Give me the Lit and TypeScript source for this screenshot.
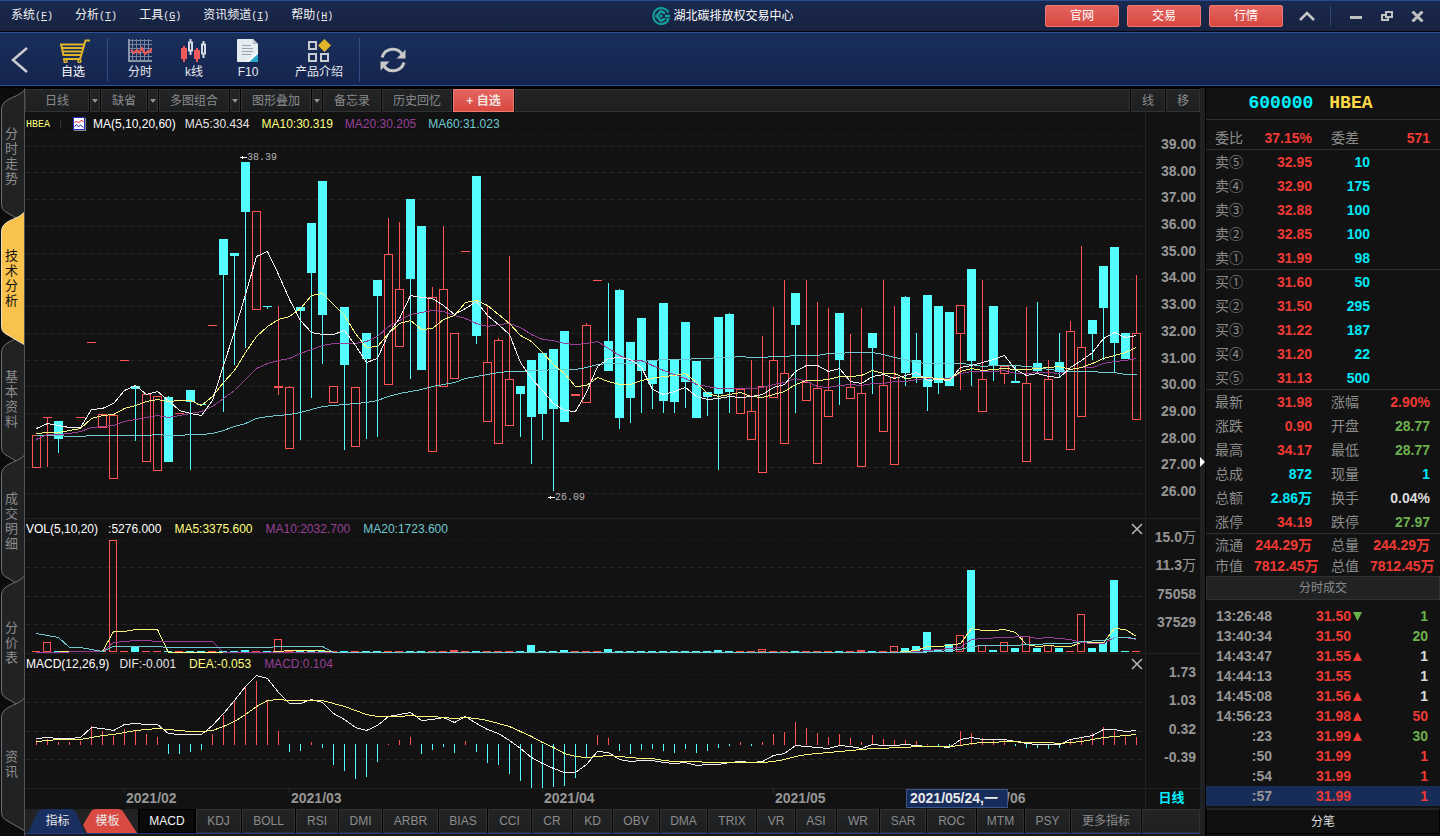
import { LitElement, html, svg, css, nothing } from "lit";
import { customElement, property } from "lit/decorators.js";
import { classMap } from "lit/directives/class-map.js";

/* One bar every STEP pixels, the first one centred at ORIGIN. */
const STEP = 11;
const ORIGIN = 11;

/* Candles: "r" rising (hollow red) or "c" falling (solid cyan), then high, body top, body bottom, low. */
type Candle = [string, number, number, number, number];
const candles: Candle[] = [
  ["r",325,325,358,358],["r",307,307,308,357],["c",311,311,329,343],["r",317,317,318,318],["r",307,307,308,308],
  ["r",232,232,233,233],["r",304,304,318,318],["r",305,305,369,369],["r",250,250,251,251],["c",275,276,279,331],
  ["r",284,284,352,352],["r",286,286,361,361],["c",286,287,352,352],["r",303,303,304,304],["c",280,280,292,360],
  ["c",294,294,295,295],["r",215,215,216,216],["c",129,129,165,302],["c",143,143,146,255],["c",52,52,102,238],
  ["r",101,101,200,200],["c",196,196,197,199],["r",196,276,278,285],["r",276,277,339,339],["c",197,197,201,330],
  ["c",113,113,163,288],["c",71,71,205,254],["r",276,276,293,293],["c",197,197,255,340],["r",277,277,337,337],
  ["c",223,223,249,329],["c",170,170,186,327],["r",108,144,275,275],["r",112,179,237,237],["c",89,89,169,269],
  ["c",116,116,260,260],["r",177,187,342,342],["r",116,179,277,277],["r",223,223,269,269],["r",141,141,142,142],
  ["c",66,66,226,234],["r",195,252,312,312],["r",228,230,334,334],["r",146,269,316,316],["c",276,276,284,327],
  ["c",250,250,307,354],["c",243,243,304,330],["c",239,239,299,381],["c",221,221,312,312],["r",284,284,286,286],
  ["r",213,215,293,293],["r",170,170,171,171],["c",173,231,261,261],["c",179,180,308,319],["c",232,232,288,313],
  ["c",208,208,261,303],["c",251,251,274,299],["c",193,193,291,303],["c",250,250,292,303],["c",212,212,272,298],
  ["c",251,251,308,308],["c",282,282,287,306],["c",207,207,284,360],["c",203,204,282,303],["r",279,279,304,304],
  ["r",250,301,330,330],["r",226,276,363,363],["r",197,250,288,288],["r",170,263,334,334],["c",183,183,215,303],
  ["r",170,272,291,291],["r",192,278,354,354],["r",198,280,307,307],["c",203,203,250,295],["r",224,277,289,289],
  ["r",198,283,357,357],["c",223,223,238,284],["r",170,275,322,322],["r",196,267,355,355],["c",186,187,263,276],
  ["c",223,250,267,273],["c",185,185,277,301],["c",196,196,273,284],["c",202,202,276,276],["r",195,195,224,280],
  ["c",159,159,251,276],["r",170,269,302,302],["c",196,196,255,271],["r",256,256,264,274],["c",256,271,273,273],
  ["r",197,273,352,352],["c",192,253,261,262],["r",250,269,330,330],["c",223,252,262,267],["r",211,221,340,340],
  ["r",136,237,307,307],["c",210,210,224,250],["c",156,156,198,250],["c",137,137,233,263],["c",223,223,249,249],
  ["r",165,223,310,310],
];

const ma5 = [318,313,315,317,317,299,298,293,280,275,284,281,290,300,303,305,290,255,221,184,146,141,164,189,210,222,224,224,220,235,252,248,223,208,185,187,188,195,204,198,191,205,214,224,252,268,280,293,300,301,282,256,248,247,249,257,279,284,281,277,286,289,288,286,287,286,284,277,274,261,255,255,261,258,271,273,266,264,268,265,262,270,269,270,257,255,252,249,245,259,265,263,266,267,257,250,242,228,222,227,225];
const ma10 = [323,322,322,320,318,308,305,304,298,295,291,289,291,290,290,295,286,272,260,242,226,216,209,206,198,185,183,194,205,223,237,236,223,213,210,219,218,209,205,192,190,195,204,213,225,231,242,254,263,276,275,267,271,274,274,270,268,266,265,263,272,283,286,284,282,286,287,284,281,274,270,270,269,266,266,265,260,263,263,268,267,267,268,269,261,258,260,259,258,259,259,258,257,256,259,257,253,248,245,242,237];
const ma20 = [329,324,324,323,321,317,316,315,311,309,307,305,307,305,303,301,296,288,280,269,258,253,250,248,243,239,235,233,233,233,231,226,216,210,204,202,200,201,205,208,213,216,214,213,217,224,229,230,233,234,233,231,238,245,250,250,255,260,264,268,274,276,278,278,278,278,277,274,272,268,271,276,277,275,274,275,273,273,271,271,269,268,268,268,263,261,261,261,260,263,263,262,262,263,259,257,257,253,251,250,248];
const ma60 = [325,325,325,326,326,325,325,325,325,325,325,324,325,325,324,324,323,320,316,313,308,306,305,304,302,299,296,295,294,293,292,290,286,283,281,279,276,274,272,268,266,264,262,261,261,260,260,259,259,259,257,254,253,253,253,251,250,249,249,249,248,248,247,247,246,247,247,246,246,245,245,245,243,243,242,242,242,244,247,249,252,253,253,253,253,254,256,255,255,255,256,257,259,260,261,261,261,262,262,264,264];

/* Volume bars whose top differs from the flat minimum. */
const volumeBase = 137;
const volumeTops: Record<number, number> = {
  1:127,7:25,9:132,19:135,22:124,38:135,45:130,48:135,52:134,62:135,66:134,75:135,78:131,79:133,80:131,81:117,82:135,83:129,84:120,85:55,
  86:130,87:135,88:127,89:133,90:121,91:133,92:130,93:133,95:99,96:133,97:127,98:65,
};
type Knot = [number, number];
const volMa5: Knot[] = [[2,136],[6,136],[7,116],[8,116],[9,114],[11,114],[12,137],[21,137],[22,136],[23,135],[26,135],[27,137],[78,137],[79,136],[80,135],[81,131],[82,131],[83,130],[84,128],[85,113],[86,115],[87,115],[88,114],[89,117],[90,129],[91,131],[92,130],[93,131],[94,131],[95,127],[97,127],[98,113],[99,114],[100,121]];
const volMa10: Knot[] = [[0,137],[6,136],[7,127],[9,125],[10,125],[11,126],[16,126],[17,137],[79,137],[80,136],[82,134],[83,133],[84,132],[85,124],[86,123],[88,122],[90,121],[91,123],[92,122],[93,123],[94,124],[95,127],[96,128],[97,128],[98,122],[99,122],[100,124]];
const volMa20: Knot[] = [[0,118],[2,122],[3,132],[4,132],[5,134],[6,136],[7,131],[11,131],[12,132],[21,132],[22,131],[26,131],[27,137],[80,137],[82,136],[83,135],[84,134],[85,131],[86,130],[89,130],[90,129],[91,129],[92,128],[94,128],[95,126],[97,125],[98,122],[99,122],[100,123]];

/* MACD histogram ends; above the axis is red, below is cyan. */
const macdAxis = 229;
const macdBars = [225,224,227,227,226,211,216,221,214,215,219,222,239,239,237,235,219,200,186,172,166,185,216,237,236,227,233,250,256,264,262,247,229,225,222,239,235,232,238,226,237,248,250,259,266,273,273,272,271,263,243,220,223,236,239,235,234,236,238,234,238,236,233,231,227,231,227,219,217,207,213,218,222,219,223,227,220,224,225,225,226,229,231,232,216,218,223,225,225,231,233,233,234,233,224,223,218,212,216,222,222];
const dif = [223,222,223,223,222,212,213,215,209,208,209,209,218,219,219,219,210,198,185,171,160,163,177,188,188,184,187,198,204,212,215,210,201,199,197,205,204,202,207,201,208,214,218,225,233,242,248,253,257,257,249,236,237,244,246,245,245,247,248,247,250,249,249,247,246,247,246,240,238,230,231,232,233,230,231,233,229,230,230,229,230,231,231,232,224,222,224,224,224,226,228,229,229,229,224,222,220,214,214,216,215];
const dea = [226,225,224,224,224,222,220,219,217,215,214,213,214,215,216,216,215,211,206,199,191,185,184,185,185,185,185,188,191,195,199,201,201,201,200,201,201,202,203,202,203,205,208,211,216,221,227,232,238,241,242,241,240,241,242,243,243,245,246,246,246,247,247,247,247,247,247,246,244,241,239,238,237,236,235,234,233,233,232,232,231,231,231,231,230,228,227,227,226,226,227,227,227,228,227,226,224,222,221,220,219];

const knots = (ys: number[]): Knot[] => ys.map((y, i) => [i, y]);
const points = (ks: Knot[]) => ks.map(([i, y]) => `${ORIGIN + STEP * i + 0.5},${y + 0.5}`).join(" ");
const curve = (ks: Knot[], tone: string) => svg`<polyline class="curve ${tone}" points=${points(ks)} />`;
const grid = (dotted: number, rows: number[]) => svg`
  <line class="grid dots" x1="0" x2="100%" y1=${dotted + 0.5} y2=${dotted + 0.5} />
  ${rows.map((y) => svg`<line class="grid" x1="1" x2="100%" y1=${y + 0.5} y2=${y + 0.5} />`)}`;

@customElement("price-chart")
class PriceChart extends LitElement {
  @property() kind = "price";

  static styles = css`
    :host { display: block; min-width: 0; min-height: 0; overflow: hidden; }
    .plot { display: block; width: 100%; height: 100%; shape-rendering: crispEdges; }
    .grid { stroke: #232323; stroke-dasharray: 5 3; }
    .dots { stroke-dasharray: 1 2; }
    .curve { fill: none; stroke-width: 1; }
    .white { stroke: #f0f0f0; }
    .yellow { stroke: #f8f880; }
    .purple { stroke: #984098; }
    .teal { stroke: #70c8d0; }
    .up { fill: none; stroke: #ff5454; }
    .up-fill { fill: #ff5454; }
    .down { fill: #54ffff; }
    .note { fill: #b4b4b4; font: 10px "Liberation Mono", monospace; }
    .arrow { fill: none; stroke: #fff; }
  `;

  private candle([k, hi, top, bot, lo]: Candle, i: number) {
    const x = ORIGIN + STEP * i;
    if (k === "c") {
      return svg`<rect class="down" x=${x - 4} y=${top} width="9" height=${bot - top} />
        <rect class="down" x=${x} y=${hi} width="1" height=${lo - hi} />`;
    }
    const flat = bot - top < 3;
    return svg`
      ${flat
        ? svg`<rect class="up-fill" x=${x - 4} y=${top} width="9" height=${bot - top} />`
        : svg`<rect class="up" x=${x - 3.5} y=${top + 0.5} width="8" height=${bot - top - 1} />`}
      ${hi < top ? svg`<rect class="up-fill" x=${x} y=${hi} width="1" height=${top - hi} />` : nothing}
      ${lo > bot ? svg`<rect class="up-fill" x=${x} y=${bot} width="1" height=${lo - bot} />` : nothing}`;
  }

  private mark(x: number, y: number, label: string) {
    return svg`<path class="arrow" d="M${x} ${y + 0.5}h7M${x + 2.5} ${y - 1}v3" />
      <text class="note" x=${x + 7} y=${y + 3}>${label}</text>`;
  }

  private price() {
    return svg`<g transform="translate(0 -24)">
      ${grid(24, [36,62,89,116,143,169,196,223,250,276,303,330,357,383])}
      ${candles.map((c, i) => this.candle(c, i))}
      ${curve(knots(ma60), "teal")}${curve(knots(ma20), "purple")}${curve(knots(ma10), "yellow")}${curve(knots(ma5), "white")}
      ${this.mark(215, 47, "38.39")}${this.mark(523, 387, "26.09")}
    </g>`;
  }

  private volume() {
    return svg`<g transform="translate(0 -24)">
      ${grid(24, [52, 81, 109])}
      ${candles.map(([k], i) => {
        const x = ORIGIN + STEP * i - 4;
        const top = volumeTops[i] ?? 136;
        const h = volumeBase - top;
        if (k === "c") return svg`<rect class="down" x=${x} y=${top} width="8" height=${h} />`;
        return h < 3
          ? svg`<rect class="up-fill" x=${x} y=${top} width="8" height=${h} />`
          : svg`<rect class="up" x=${x + 0.5} y=${top + 0.5} width="7" height=${h - 1} />`;
      })}
      ${curve(volMa5, "yellow")}${curve(volMa10, "purple")}${curve(volMa20, "teal")}
    </g>`;
  }

  private macd() {
    return svg`<g transform="translate(0 -159)">
      ${grid(159, [187, 216, 244])}
      ${macdBars.map((y, i) => {
        const x = ORIGIN + STEP * i;
        return y <= macdAxis
          ? svg`<rect class="up-fill" x=${x} y=${y} width="1" height=${macdAxis + 1 - y} />`
          : svg`<rect class="down" x=${x} y=${macdAxis} width="1" height=${y - macdAxis} />`;
      })}
      ${curve(knots(dif), "white")}${curve(knots(dea), "yellow")}
    </g>`;
  }

  render() {
    const body = this.kind === "price" ? this.price() : this.kind === "volume" ? this.volume() : this.macd();
    return html`<svg class="plot" role="img" aria-label=${this.kind}>${body}</svg>`;
  }
}

@customElement("chart-panel")
class ChartPanel extends LitElement {
  @property() kind = "price";
  @property({ attribute: false }) legend: [string, string][] = [];
  @property({ attribute: false }) scale: string[] = [];

  static styles = css`
    :host { display: grid; grid-template-columns: minmax(0, 1fr) 55px; border-bottom: 1px solid #222; box-sizing: border-box; height: 135px; }
    :host([kind="price"]) { height: auto; flex: 1; min-height: 0; }
    .main { display: grid; grid-template-rows: 20px minmax(0, 1fr); min-width: 0; min-height: 0; }
    :host([kind="price"]) .main { grid-template-rows: 22px minmax(0, 1fr); }
    .legend { display: flex; align-items: center; gap: 13px; box-sizing: border-box; padding: 0 2px 0 1px; font: 12px/16px "Liberation Sans", sans-serif; white-space: nowrap; }
    :host([kind="price"]) .legend { gap: 12px; padding-top: 2px; }
    .code { display: flex; align-items: center; gap: 10px; color: #ffff80; font: 10px "Liberation Mono", monospace; }
    .code::after { content: ""; width: 1px; height: 8px; background: #333; }
    .badge { margin-right: -5px; }
    .white { color: #fff; }
    .soft { color: #e4e4e4; }
    .yellow { color: #ffff80; }
    .purple { color: #984098; }
    .teal { color: #70c8d0; }
    .first { margin-right: -3px; }
    .close { margin-left: auto; padding: 0; width: 12px; height: 12px; border: 0; background: none; display: flex; }
    .axis { display: flex; flex-direction: column; justify-content: space-between; box-sizing: border-box; padding: 10px 4px 23px 0; border-left: 1px solid #222; text-align: right; color: #969696; font: bold 14px/16px "Liberation Sans", "Noto Sans CJK SC", sans-serif; }
    :host([kind="price"]) .axis { padding: 24px 4px 19px 0; }
    .unit { font-weight: 400; }
  `;

  render() {
    return html`
      <div class="main">
        <div class="legend">
          ${this.kind === "price"
            ? html`<span class="code">HBEA</span>
                <svg class="badge" width="13" height="14" viewBox="0 0 13 14"><path fill="#888" d="M1 1h12v13H1z"/><path fill="#fff" stroke="#2030c0" d="M.5.5h11v12H.5z"/><path fill="none" stroke="#f02020" d="M1.500 6l2-2 2 2 3-3 2 2"/><path fill="none" stroke="#2020d0" d="M1.500 9.500l2-2 2 2.500 2-2 3 2.500"/></svg>`
            : nothing}
          ${this.legend.map(([text, tone], i) => html`<span class="${tone} ${i === 0 ? "first" : ""}">${text}</span>`)}
          ${this.kind === "price"
            ? nothing
            : html`<button class="close" aria-label="关闭"><svg width="12" height="12"><path d="M1 1L11 11M11 1L1 11" stroke="#b8b8b8" stroke-width="1.500"/></svg></button>`}
        </div>
        <price-chart kind=${this.kind}></price-chart>
      </div>
      <div class="axis">
        ${this.scale.map((s) => html`<span>${s.replace("万", "")}${s.endsWith("万") ? html`<span class="unit">万</span>` : nothing}</span>`)}
      </div>`;
  }
}

const menus: [string, string][] = [["系统", "F"], ["分析", "T"], ["工具", "G"], ["资讯频道", "I"], ["帮助", "H"]];
const sideTabs = ["分时走势", "技术分析", "基本资料", "成交明细", "分价表", "资讯"];
const indicators: [string, number][] = [
  ["MACD",56],["KDJ",45],["BOLL",53],["RSI",42],["DMI",43],["ARBR",55],["BIAS",48],["CCI",43],["CR",40],["KD",39],["OBV",46],
  ["DMA",47],["TRIX",48],["VR",38],["ASI",40],["WR",42],["SAR",46],["ROC",49],["MTM",47],["PSY",45],["更多指标",70],
];
const sells = [["卖⑤","32.95","10"],["卖④","32.90","175"],["卖③","32.88","100"],["卖②","32.85","100"],["卖①","31.99","98"]];
const buys = [["买①","31.60","50"],["买②","31.50","295"],["买③","31.22","187"],["买④","31.20","22"],["买⑤","31.13","500"]];
const facts = [
  ["最新","31.98","red","涨幅","2.90%","red"],
  ["涨跌","0.90","red","开盘","28.77","green"],
  ["最高","34.17","red","最低","28.77","green"],
  ["总成","872","cyan","现量","1","cyan"],
  ["总额","2.86万","cyan","换手","0.04%","pale"],
  ["涨停","34.19","red","跌停","27.97","green"],
];
const totals = [
  ["流通","244.29万","red","总量","244.29万","red"],
  ["市值","7812.45万","red","总值","7812.45万","red"],
];
const trades = [
  ["13:26:48","31.50","down","1","green"],
  ["13:40:34","31.50","","20","green"],
  ["14:43:47","31.55","up","1","pale"],
  ["14:44:13","31.55","","1","pale"],
  ["14:45:08","31.56","up","1","pale"],
  ["14:56:23","31.98","up","50","red"],
  [":23","31.99","up","30","green"],
  [":50","31.99","","1","red"],
  [":54","31.99","","1","red"],
  [":57","31.99","","1","red"],
];
const months: [number, string][] = [[99, "2021/02"], [264, "2021/03"], [517, "2021/04"], [748, "2021/05"]];

const cartIcon = svg`<svg width="34" height="24" viewBox="-4 0 34 24" fill="none" stroke="#e0b428" stroke-width="2"><path d="M30 1.500h-4.500L21 17l-1 3H3M0 5.500h24M1 5l2.500 11.500M2 9h21M3 12.500h19M3 16h18"/><circle cx="5.500" cy="22" r="1.500" stroke-width="1.500"/><circle cx="19.500" cy="22" r="1.500" stroke-width="1.500"/></svg>`;
const timeIcon = svg`<svg width="24" height="24" viewBox="0 0 24 24" fill="none"><path stroke="#7684a0" d="M4.500 0v21M8.500 0v21M12.500 0v21M16.500 0v21M20.500 0v21M2 1.500h22M2 5.500h22M2 9.500h22M2 13.500h22M2 17.500h22"/><path stroke="#8894a8" stroke-width="2" d="M1 0v22h23"/><path stroke="#f05a5a" stroke-width="2" d="M3 11l3 3 3-3 2 3 3-5 3 6 3-3 2 1 2-4"/></svg>`;
const candleIcon = svg`<svg width="26" height="24" viewBox="0 0 26 24"><path fill="#f05a5a" d="M0 9h6v11H4v3H2v-3H0zM2 7h2v2H2zM13 11h6v9h-2v3h-2v-3h-2zM15 9h2v2h-2z"/><path fill="none" stroke="#d4dae4" stroke-width="2" d="M8 3.500h3v8H8zM9.500 0v3M9.500 12v4M21 5.500h3v9h-3zM22.500 2v3M22.500 15v4"/></svg>`;
const fileIcon = svg`<svg width="22" height="24" viewBox="0 0 22 24"><path fill="#e4ecf0" d="M1 0h15l5 5v18H1a1 1 0 0 1-1-1V1a1 1 0 0 1 1-1z"/><path fill="#b8c4cc" d="M16 0l5 5h-5z"/><path stroke="#9aa4ac" d="M5 6.500h9M5 9.500h11M5 12.500h11M5 15.500h9"/><path fill="#fff" d="M21 12v5l-9 6h-3z"/><path fill="#28a8c8" d="M21 15v8h-9z"/></svg>`;
const productIcon = svg`<svg width="24" height="24" viewBox="0 0 24 24"><path fill="none" stroke="#c8ccd2" stroke-width="2" d="M2 3h7v7H2zM2 15h7v7H2zM14 15h7v7h-7z"/><path fill="#e0b428" d="M17.500 0l6.500 6.500-6.500 6.500L11 6.500z"/></svg>`;
const logoIcon = svg`<svg width="18" height="18" viewBox="0 0 18 18" fill="none" stroke="#16a09c"><path stroke-width="2" d="M16.500 5.500A8 8 0 1 0 16.500 12.500"/><path stroke-width="2.500" d="M18 9h-5M13 6.500L9 4 4.500 9 9 14l4-2.500"/><path stroke-width="1.500" d="M8 9l1-1 1 1-1 1zM14 12h3.500"/></svg>`;
const refreshIcon = svg`<svg width="28" height="28" viewBox="0 0 28 28" fill="none" stroke="#c8c8c8" stroke-width="3"><path d="M3 11.500C6 1.500 19 .5 23.500 9M25 16.500C22 26.500 9 27.500 4.500 19"/><path fill="#c8c8c8" stroke="none" d="M26.500 3.500v9h-9zM1.500 24.500v-9h9z"/></svg>`;

@customElement("app-root")
class AppRoot extends LitElement {
  static styles = css`
    :host { display: flex; flex-direction: column; height: 100vh; background: #121212; color: #8c8c8c; font: 12px/16px "Liberation Sans", "Noto Sans CJK SC", sans-serif; overflow: hidden; cursor: default; }
    button { font: inherit; color: inherit; padding: 0; margin: 0; border: 0; background: none; white-space: nowrap; }
    svg { display: block; flex: none; }

    .menubar { display: grid; grid-template-columns: minmax(0, 1fr) auto minmax(0, 1fr); align-items: center; height: 32px; box-sizing: border-box; border-top: 1px solid #29498f; border-bottom: 1px solid #03060e; background: linear-gradient(#1a2950, #17223f); color: #f0f0f0; }
    .menus { display: flex; gap: 22px; padding-left: 11px; }
    .key { font: 10px/16px "Liberation Mono", monospace; }
    .title { display: flex; align-items: center; gap: 3px; padding-left: 6px; color: #fff; }
    .tools { display: flex; align-items: center; justify-content: flex-end; padding-right: 16px; }
    .cta { width: 74px; height: 22px; margin-right: 8px; border: 1px solid #e87870; border-radius: 2px; box-sizing: border-box; background: linear-gradient(#e46460, #d84840); color: #fff; }
    .fold { margin: 0 15px 0 8px; }
    .rule { width: 1px; height: 20px; background: #34466e; }
    .win { margin-left: 18px; }

    .toolbar { display: flex; align-items: center; height: 56px; box-sizing: border-box; border-top: 1px solid #2c509c; border-bottom: 2px solid #000; box-shadow: inset 0 -1px #2c509c; background: linear-gradient(#182f5a, #16244e); color: #e4e8f0; }
    .back { width: 46px; padding-left: 11px; }
    .tool { width: 54px; display: flex; flex-direction: column; align-items: center; gap: 1px; }
    .tool.wide { width: 80px; margin-left: 4px; }
    .tool.current { color: #fff; }
    .split { width: 1px; height: 44px; background: #324b80; }
    .group { display: flex; padding: 0 0 0 5px; }
    .first-group { padding: 0 7px 0 0; }
    .refresh { margin-left: 19px; }

    .body { flex: 1; min-height: 0; display: flex; }
    .side { width: 25px; flex: none; display: flex; flex-direction: column; padding: 2px 0 17px; box-sizing: border-box; border-right: 1px solid #555; background: #0c0c0c; }
    .side-tab { flex: 1; min-height: 0; position: relative; display: flex; align-items: center; justify-content: center; padding-top: 11px; }
    .side-tab.active { z-index: 1; color: #141414; }
    .shape { position: absolute; left: 0; top: 0; width: 24px; height: calc(100% + 11px); fill: #202224; stroke: #707070; overflow: visible; }
    .active .shape { fill: #f8c24c; stroke: #e8e0c0; }
    .side-text { position: relative; width: 14px; margin-right: 1px; white-space: normal; word-break: break-all; font-size: 13px; line-height: 15px; }

    .charts { flex: 1; min-width: 0; display: flex; flex-direction: column; }
    .chartbar { display: flex; gap: 1px; height: 24px; padding-top: 1px; box-sizing: border-box; background: #000; }
    .cell { box-sizing: border-box; height: 23px; flex: none; border: 1px solid #303234; background: linear-gradient(#222426, #1c1e20); }
    .cell.d { width: 64px; }
    .cell.arrow { width: 10px; display: flex; align-items: center; justify-content: center; }
    .cell.w2 { width: 46px; }
    .cell.w3 { width: 58px; }
    .cell.w4 { width: 70px; }
    .cell.tail { width: 34px; }
    .cell.pick { width: 61px; background: linear-gradient(#e46460, #d84840); border-color: #ec7c74; color: #f4e4e0; font-weight: 700; }
    .cell.fill { flex: 1; min-width: 0; }

    .dates { display: grid; grid-template-columns: minmax(0, 1fr) 55px; height: 20px; flex: none; }
    .date-plot { width: 100%; height: 20px; font: bold 14px "Liberation Sans", "Noto Sans CJK SC", sans-serif; }
    .month { fill: #969696; }
    .tick { stroke: #2c2c2c; }
    .cursor { fill: #182c5c; stroke: #3c5488; }
    .cursor-text { fill: #e8e8e8; }
    .period { border-left: 1px solid #222; box-sizing: border-box; padding-right: 3px; text-align: center; color: #00f0ff; font-weight: 700; font-size: 13px; line-height: 17px; }

    .tabs { display: flex; gap: 1px; height: 27px; flex: none; box-sizing: border-box; padding-bottom: 3px; background: linear-gradient(#000 24px, #1f3c80 24px, #1f3c80 25px, #1a1a1c 25px); }
    .tabs .cell { height: 24px; }
    .tabs .cell.on { background: #0a0a0a; border-color: #000; color: #f4f4f4; }
    .modes { width: 113px; flex: none; display: flex; background: #202224; }
    .mode { position: relative; width: 57px; margin-left: 3px; height: 24px; padding-left: 2px; color: #e8e8e8; }
    .mode + .mode { width: 54px; margin-left: -2px; padding: 0 5px 0 0; }
    .mode svg { position: absolute; inset: 0; }
    .mode-text { position: relative; }

    .grip { width: 5px; flex: none; background: #1e2022; display: flex; align-items: center; }
    .quote { width: 234px; flex: none; border-left: 1px solid #000; display: flex; flex-direction: column; }
    .name { display: flex; justify-content: center; gap: 16px; height: 32px; box-sizing: border-box; padding-right: 25px; border-bottom: 1px solid #303030; font: bold 18px/30px "Liberation Mono", monospace; color: #fcd848; }
    .name .id { color: #00f0ff; }
    table { border-collapse: collapse; table-layout: fixed; width: 100%; white-space: nowrap; }
    .book col:nth-child(1) { width: 48px; }
    .book col:nth-child(2), .book col:nth-child(3) { width: 58px; }
    th, td { padding: 0; line-height: 20px; }
    th { font-weight: 400; font-size: 14px; text-align: left; padding-left: 9px; }
    td { font: bold 14px/20px "Liberation Sans", "Noto Sans CJK SC", sans-serif; text-align: right; }
    .book th, .book td { padding-top: 2px; }
    .book th + td + th { padding-left: 19px; }
    .book td:nth-child(4) { padding-right: 10px; }
    .book tr { height: 24px; }
    .book tbody { border-bottom: 1px solid #303030; }
    .book .ratio tr { height: 29px; }
    .book .ratio th, .book .ratio td { padding-top: 8px; }
    .book .sum { border-bottom: 0; }
    .book .sum tr { height: 21px; }
    .book .sum th, .book .sum td { line-height: 18px; }
    .red { color: #f03a34; }
    .cyan { color: #00e8f8; }
    .green { color: #6cb04c; }
    .pale { color: #dcdcdc; }
    .caption { height: 24px; box-sizing: border-box; border: 1px solid #303234; background: #202224; text-align: center; line-height: 22px; margin: 1px 0 6px; }
    .ticks { margin-bottom: 2px; }
    .ticks tr { height: 20px; }
    .ticks col:nth-child(1) { width: 66px; }
    .ticks col:nth-child(2) { width: 79px; }
    .ticks td:nth-child(1) { color: #969696; }
    .ticks td:nth-child(3) { padding-left: 2px; }
    .ticks td:nth-child(4) { padding-right: 12px; }
    .ticks .now { background: #182c58; }
    .ticks-foot { flex: none; height: 26px; border: 1px solid #000; border-top: 2px solid #242424; box-sizing: border-box; color: #dcdcdc; background: #101010; }
  `;

  private factRows(rows: string[][]) {
    return rows.map((r) => html`<tr><th>${r[0]}</th><td class=${r[2]}>${r[1]}</td><th>${r[3]}</th><td class=${r[5]}>${r[4]}</td></tr>`);
  }

  private bookRows(rows: string[][]) {
    return rows.map((r) => html`<tr><th>${r[0]}</th><td class="red">${r[1]}</td><td class="cyan">${r[2]}</td><td></td></tr>`);
  }

  private dropButton(label: string) {
    return html`<button class="cell arrow" aria-haspopup="menu" aria-label=${label}><svg width="6" height="4"><path d="M0 0h6L3 4z" fill="#909090"/></svg></button>`;
  }

  render() {
    return html`
      <header class="menubar">
        <nav class="menus">${menus.map(([t, k]) => html`<button>${t}<span class="key">(<u>${k}</u>)</span></button>`)}</nav>
        <div class="title">${logoIcon}<span>湖北碳排放权交易中心</span></div>
        <div class="tools">
          <button class="cta">官网</button><button class="cta">交易</button><button class="cta">行情</button>
          <button class="fold" aria-label="收起"><svg width="16" height="10" viewBox="0 0 16 10"><path d="M1 9l7-7 7 7" fill="none" stroke="#c8c8c8" stroke-width="2.500"/></svg></button>
          <span class="rule"></span>
          <button class="win" aria-label="最小化"><svg width="14" height="12"><path d="M1 6h12v3H1z" fill="#c0c0c0"/></svg></button>
          <button class="win" aria-label="还原"><svg width="12" height="10" viewBox="0 0 12 10" fill="none" stroke="#c0c0c0" stroke-width="2"><path d="M5 1h6v5H5z"/><path d="M4 4H1v5h6V7"/></svg></button>
          <button class="win" aria-label="关闭"><svg width="13" height="11" viewBox="0 0 13 11"><path d="M1.500 .5l10 10M11.500 .5l-10 10" stroke="#c0c0c0" stroke-width="3"/></svg></button>
        </div>
      </header>

      <div class="toolbar">
        <button class="back" aria-label="返回"><svg width="17" height="26" viewBox="0 0 17 26"><path d="M16 1L2 13l14 12" fill="none" stroke="#c8ccd0" stroke-width="2.500"/></svg></button>
        <div class="group first-group"><button class="tool current">${cartIcon}自选</button></div>
        <span class="split"></span>
        <div class="group">
          <button class="tool">${timeIcon}分时</button>
          <button class="tool">${candleIcon}k线</button>
          <button class="tool">${fileIcon}F10</button>
          <button class="tool wide">${productIcon}产品介绍</button>
        </div>
        <span class="split"></span>
        <button class="refresh" aria-label="刷新">${refreshIcon}</button>
      </div>

      <div class="body">
        <nav class="side">
          ${sideTabs.map((t, i) => html`
            <button class=${classMap({ "side-tab": true, active: i === 1 })}>
              <svg class="shape" viewBox="0 0 24 132" preserveAspectRatio="none"><path vector-effect="non-scaling-stroke" d="M24 .5C19 6 11 7 6 11Q1.500 14 1.500 20V114Q1.500 119 5 121L24 132"/></svg>
              <span class="side-text">${t}</span>
            </button>`)}
        </nav>

        <main class="charts">
          <div class="chartbar">
            <button class="cell d">日线</button>${this.dropButton("周期")}
            <button class="cell w2">缺省</button>${this.dropButton("模板")}
            <button class="cell w4">多图组合</button>${this.dropButton("组合")}
            <button class="cell w4">图形叠加</button>${this.dropButton("叠加")}
            <button class="cell w3">备忘录</button>
            <button class="cell w4">历史回忆</button>
            <button class="cell pick">+ 自选</button>
            <span class="cell fill"></span>
            <button class="cell tail">线</button>
            <button class="cell tail">移</button>
          </div>
          <chart-panel kind="price"
            .legend=${[["MA(5,10,20,60)", "white"], ["MA5:30.434", "soft"], ["MA10:30.319", "yellow"], ["MA20:30.205", "purple"], ["MA60:31.023", "teal"]]}
            .scale=${["39.00","38.00","37.00","36.00","35.00","34.00","33.00","32.00","31.00","30.00","29.00","28.00","27.00","26.00"]}></chart-panel>
          <chart-panel kind="volume"
            .legend=${[["VOL(5,10,20)", "white"], [":5276.000", "white"], ["MA5:3375.600", "yellow"], ["MA10:2032.700", "purple"], ["MA20:1723.600", "teal"]]}
            .scale=${["15.0万", "11.3万", "75058", "37529"]}></chart-panel>
          <chart-panel kind="macd"
            .legend=${[["MACD(12,26,9)", "white"], ["DIF:-0.001", "soft"], ["DEA:-0.053", "yellow"], ["MACD:0.104", "purple"]]}
            .scale=${["1.73", "1.03", "0.32", "-0.39"]}></chart-panel>
          <div class="dates">
            <svg class="date-plot">
              ${months.map(([x, m]) => svg`<line class="tick" x1=${x + 0.5} x2=${x + 0.5} y1="0" y2="4"/><text class="month" x=${x + 2} y="14">${m}</text>`)}
              <text class="month" x="981" y="14">/06</text>
              <rect class="cursor" x="881.5" y="0.5" width="101" height="18"/>
              <text class="cursor-text" x="885" y="14">2021/05/24,一</text>
            </svg>
            <div class="period">日线</div>
          </div>
          <div class="tabs">
            <div class="modes">
              <button class="mode"><svg width="57" height="24"><path d="M0 24L9 4Q11 0 15 0H42Q46 0 48 4L57 24z" fill="#182f60"/></svg><span class="mode-text">指标</span></button>
              <button class="mode"><svg width="54" height="24"><path d="M4 24L0 16 7 4Q9 0 13 0H35Q39 0 41 4L54 24z" fill="#d84a42"/></svg><span class="mode-text">模板</span></button>
            </div>
            ${indicators.map(([t, w], i) => html`<button class=${classMap({ cell: true, on: i === 0 })} style="width:${w}px">${t}</button>`)}
            <span class="cell fill"></span>
          </div>
        </main>

        <div class="grip"><svg width="5" height="10"><path d="M0 0l5 5-5 5z" fill="#fff"/></svg></div>

        <aside class="quote">
          <div class="name"><span class="id">600000</span><span>HBEA</span></div>
          <table class="book">
            <colgroup><col><col><col><col></colgroup>
            <tbody class="ratio">${this.factRows([["委比", "37.15%", "red", "委差", "571", "red"]])}</tbody>
            <tbody>${this.bookRows(sells)}</tbody>
            <tbody>${this.bookRows(buys)}</tbody>
            <tbody>${this.factRows(facts)}</tbody>
            <tbody class="sum">${this.factRows(totals)}</tbody>
          </table>
          <div class="caption">分时成交</div>
          <table class="ticks">
            <colgroup><col><col><col><col></colgroup>
            <tbody>
              ${trades.map((t, i) => html`
                <tr class=${i === trades.length - 1 ? "now" : ""}>
                  <td>${t[0]}</td><td class="red">${t[1]}</td>
                  <td>${t[2] ? html`<svg width="9" height="9"><path d=${t[2] === "up" ? "M4.500 0L9 9H0z" : "M0 0h9L4.500 9z"} fill=${t[2] === "up" ? "#f03a34" : "#6cb04c"}/></svg>` : nothing}</td>
                  <td class=${t[4]}>${t[3]}</td>
                </tr>`)}
            </tbody>
          </table>
          <button class="ticks-foot">分笔</button>
        </aside>
      </div>`;
  }
}
